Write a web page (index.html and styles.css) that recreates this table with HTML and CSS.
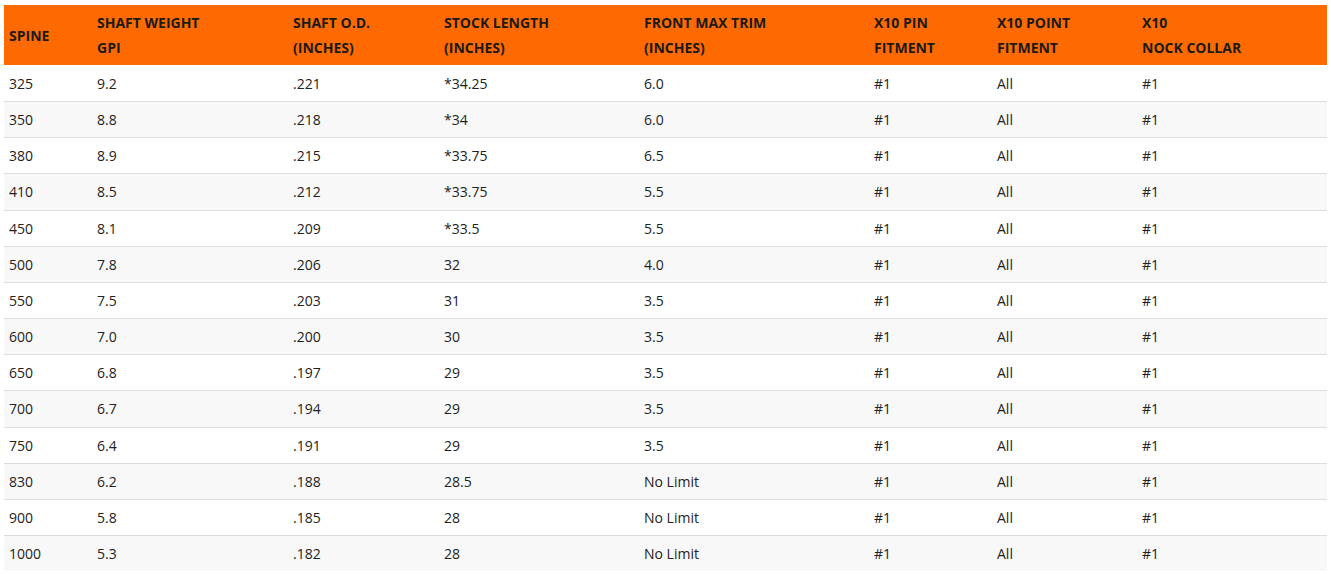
FILE: index.html
```html
<!DOCTYPE html>
<html lang="en">
<head>
<meta charset="utf-8">
<title>Spine Chart</title>
<link rel="stylesheet" href="styles.css">
</head>
<body>
<div class="wrap">
<table class="spec">
<colgroup>
<col class="c1"><col class="c2"><col class="c3"><col class="c4"><col class="c5"><col class="c6"><col class="c7"><col class="c8">
</colgroup>
<thead>
<tr>
<th>SPINE</th>
<th>SHAFT WEIGHT<br>GPI</th>
<th>SHAFT O.D.<br>(INCHES)</th>
<th>STOCK LENGTH<br>(INCHES)</th>
<th>FRONT MAX TRIM<br>(INCHES)</th>
<th>X10 PIN<br>FITMENT</th>
<th>X10 POINT<br>FITMENT</th>
<th>X10<br>NOCK COLLAR</th>
</tr>
</thead>
<tbody>
<tr><td>325</td><td>9.2</td><td>.221</td><td>*34.25</td><td>6.0</td><td>#1</td><td>All</td><td>#1</td></tr>
<tr><td>350</td><td>8.8</td><td>.218</td><td>*34</td><td>6.0</td><td>#1</td><td>All</td><td>#1</td></tr>
<tr><td>380</td><td>8.9</td><td>.215</td><td>*33.75</td><td>6.5</td><td>#1</td><td>All</td><td>#1</td></tr>
<tr><td>410</td><td>8.5</td><td>.212</td><td>*33.75</td><td>5.5</td><td>#1</td><td>All</td><td>#1</td></tr>
<tr><td>450</td><td>8.1</td><td>.209</td><td>*33.5</td><td>5.5</td><td>#1</td><td>All</td><td>#1</td></tr>
<tr><td>500</td><td>7.8</td><td>.206</td><td>32</td><td>4.0</td><td>#1</td><td>All</td><td>#1</td></tr>
<tr><td>550</td><td>7.5</td><td>.203</td><td>31</td><td>3.5</td><td>#1</td><td>All</td><td>#1</td></tr>
<tr><td>600</td><td>7.0</td><td>.200</td><td>30</td><td>3.5</td><td>#1</td><td>All</td><td>#1</td></tr>
<tr><td>650</td><td>6.8</td><td>.197</td><td>29</td><td>3.5</td><td>#1</td><td>All</td><td>#1</td></tr>
<tr><td>700</td><td>6.7</td><td>.194</td><td>29</td><td>3.5</td><td>#1</td><td>All</td><td>#1</td></tr>
<tr><td>750</td><td>6.4</td><td>.191</td><td>29</td><td>3.5</td><td>#1</td><td>All</td><td>#1</td></tr>
<tr><td>830</td><td>6.2</td><td>.188</td><td>28.5</td><td>No Limit</td><td>#1</td><td>All</td><td>#1</td></tr>
<tr><td>900</td><td>5.8</td><td>.185</td><td>28</td><td>No Limit</td><td>#1</td><td>All</td><td>#1</td></tr>
<tr><td>1000</td><td>5.3</td><td>.182</td><td>28</td><td>No Limit</td><td>#1</td><td>All</td><td>#1</td></tr>
</tbody>
</table>
</div>
</body>
</html>
```
FILE: styles.css
```css
html, body {
  margin: 0;
  padding: 0;
  background: #ffffff;
}
.wrap {
  padding: 5px 4px 0 4px;
}
.spec {
  width: 1323px;
  table-layout: fixed;
  border-collapse: collapse;
  font-family: "Open Sans", "Liberation Sans", sans-serif;
  color: #222222;
}
.c1 { width: 88px; }
.c2 { width: 196px; }
.c3 { width: 151px; }
.c4 { width: 200px; }
.c5 { width: 230px; }
.c6 { width: 123px; }
.c7 { width: 145px; }
.c8 { width: 190px; }
.spec th {
  background: #ff6a00;
  color: #1a1a1a;
  font-weight: 700;
  font-size: 14px;
  line-height: 25px;
  text-align: left;
  padding: 5px 5px;
  vertical-align: middle;
}
.spec td {
  font-size: 14px;
  line-height: 21.15px;
  padding: 7px 5px;
  border-top: 1px solid #dddddd;
  text-align: left;
}
.spec tbody tr:first-child td {
  border-top: none;
  padding-top: 8px;
}
.spec tbody tr:nth-child(even) td {
  background: #f8f8f8;
}
```
